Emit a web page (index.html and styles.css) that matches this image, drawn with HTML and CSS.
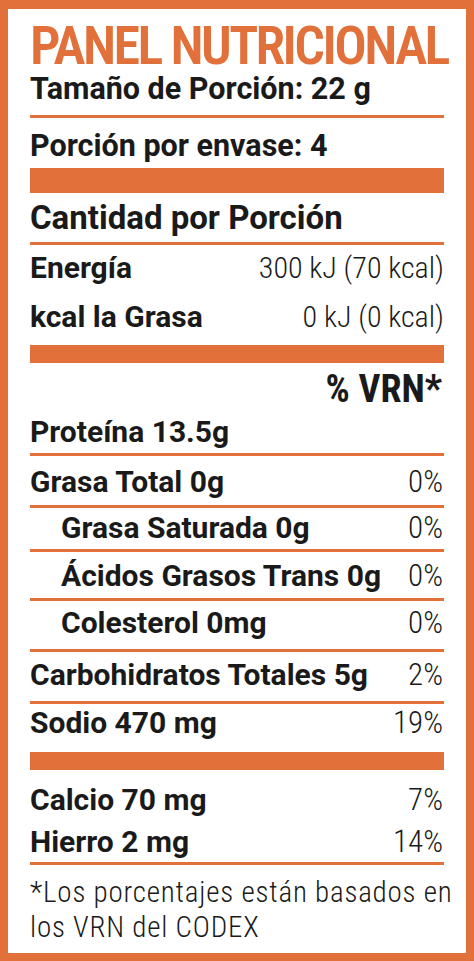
FILE: index.html
```html
<!DOCTYPE html>
<html>
<head>
  <meta charset="utf-8">
  <title>Panel Nutricional</title>
  <link rel="stylesheet" href="styles.css">
</head>
<body>
  <div class="panel">
    <h1 class="title">PANEL NUTRICIONAL</h1>

    <div class="row serving size">Tamaño de Porción: 22 g</div>
    <div class="row serving count">Porción por envase: 4</div>
    <div class="bar thick"></div>

    <div class="row amount">Cantidad por Porción</div>
    <div class="row energy first"><span>Energía</span><span class="val">300 kJ (70 kcal)</span></div>
    <div class="row energy second"><span>kcal la Grasa</span><span class="val">0 kJ (0 kcal)</span></div>
    <div class="bar"></div>

    <div class="row vrn">% VRN*</div>

    <div class="row item protein"><span>Proteína 13.5g</span></div>
    <div class="row item fat"><span>Grasa Total 0g</span><span class="val">0%</span></div>
    <div class="row item sat sub"><span>Grasa Saturada 0g</span><span class="val">0%</span></div>
    <div class="row item trans sub"><span>Ácidos Grasos Trans 0g</span><span class="val">0%</span></div>
    <div class="row item chol sub"><span>Colesterol 0mg</span><span class="val">0%</span></div>
    <div class="row item carbs"><span>Carbohidratos Totales 5g</span><span class="val">2%</span></div>
    <div class="row item sodium"><span>Sodio 470 mg</span><span class="val">19%</span></div>
    <div class="bar"></div>

    <div class="row item calcium"><span>Calcio 70 mg</span><span class="val">7%</span></div>
    <div class="row item iron"><span>Hierro 2 mg</span><span class="val">14%</span></div>

    <p class="note">*Los porcentajes están basados en<br>los VRN del CODEX</p>
  </div>
</body>
</html>
```

FILE: styles.css
```css
body { margin:0; background:#fff }

.panel {
  box-sizing:border-box;
  width:474px; height:961px;
  border:solid #e2703a;
  border-width:9px 8px 8px 8px;
  padding:12px 22px 0 22px;
  font-family:Roboto, "DejaVu Sans Condensed", sans-serif;
  font-stretch:92%;
  font-weight:bold;
  color:#1a1a1a;
}

.title {
  margin:0;
  font-size:54px; line-height:50px;
  font-weight:600;
  font-stretch:75%;
  letter-spacing:-2.6px;
  color:#e2703a;
  white-space:nowrap;
}

.row {
  display:flex;
  justify-content:space-between;
  align-items:baseline;
  white-space:nowrap;
}
.val { font-weight:300; font-stretch:77% }

.bar { height:18px; background:#e2703a }
.bar.thick { height:25px; margin-top:3px }

/* top section */
.serving { font-size:30.5px; line-height:38px }
.size { line-height:36px; padding-bottom:8px; border-bottom:3px solid #e2703a }
.count { padding-top:9px }

.amount { font-size:33px; line-height:42px; padding:4px 0 3px; border-bottom:3px solid #e2703a }
.energy { font-size:30px; line-height:46px }
.energy.second { padding-top:3px; margin-bottom:5px }

.vrn { justify-content:flex-end; font-size:38px; line-height:52px; font-stretch:85%; padding-right:2px }

/* nutrients */
.item { font-size:30px; line-height:44px; border-bottom:3px solid #e2703a }
.item .val { font-size:31px; padding-right:1px }
.sub { padding-left:31px }

.protein { line-height:33px; padding-bottom:5px }
.fat { padding:4px 0 1px }
.sat { line-height:40px; padding-bottom:1px }
.trans { padding-top:2px }
.chol { padding-bottom:4px }
.carbs { padding:1px 0 4px }
.sodium { line-height:38px; border-bottom:0; margin-bottom:10px }
.calcium { padding-top:8px; border-bottom:0 }
.iron { line-height:40px }

.note {
  margin:0;
  padding-top:10px;
  font-size:29px; line-height:35px;
  font-weight:300;
  font-stretch:75%;
  letter-spacing:0.8px;
  white-space:nowrap;
}
```
